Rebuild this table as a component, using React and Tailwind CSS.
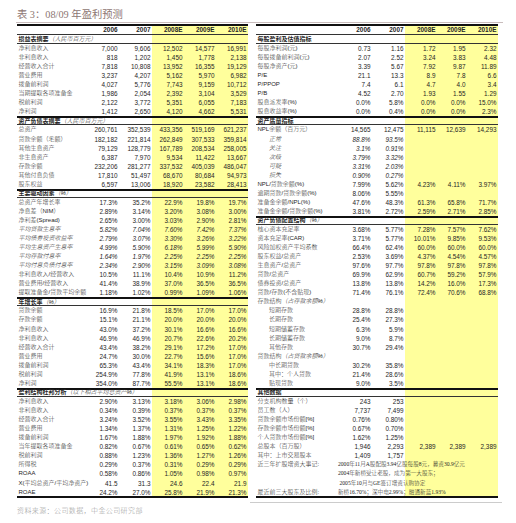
import React from 'react';

const FONT = "font-['Liberation_Sans','Noto_Sans_CJK_SC',sans-serif]";

const leftCols = ['w-[69px]', 'w-[33px]', 'w-[33px]', 'w-[32px]', 'w-[32px]', 'w-[32px]'];
const rightCols = ['w-[82px]', 'w-[34px]', 'w-[33px]', 'w-[32px]', 'w-[30px]', 'w-[31px]'];

const years = ['2006', '2007', '2008E', '2009E', '2010E'];

// 左表
const leftRows = [
  { sec: true, first: true, label: '损益表摘要', note: '（人民币百万元）' },
  { label: '净利息收入', v: ['7,000', '9,606', '12,502', '14,577', '16,991'] },
  { label: '非利息收入', v: ['818', '1,202', '1,450', '1,778', '2,138'] },
  { label: '经营收入合计', v: ['7,818', '10,808', '13,952', '16,355', '19,129'] },
  { label: '营业费用', v: ['3,237', '4,207', '5,162', '5,970', '6,982'] },
  { label: '拨备前利润', v: ['4,027', '5,776', '7,743', '9,159', '10,712'] },
  { label: '当期提取各项准备金', v: ['1,986', '2,054', '2,392', '3,104', '3,529'] },
  { label: '税前利润', v: ['2,122', '3,772', '5,351', '6,055', '7,183'] },
  { label: '净利润', v: ['1,412', '2,650', '4,120', '4,662', '5,531'] },
  { sec: true, label: '资产负债表摘要', note: '（人民币百万元）' },
  { label: '总资产', v: ['260,761', '352,539', '433,356', '519,169', '621,237'] },
  { label: '贷款余额（毛额）', v: ['182,182', '221,814', '262,849', '307,533', '359,814'] },
  { label: '其他生息资产', v: ['79,129', '128,779', '167,789', '208,534', '258,005'] },
  { label: '非生息资产', v: ['6,387', '7,970', '9,534', '11,422', '13,667'] },
  { label: '存款余额', v: ['232,206', '281,277', '337,532', '405,039', '486,047'] },
  { label: '其他付息负债', v: ['17,810', '51,497', '68,670', '80,684', '94,973'] },
  { label: '股东权益', v: ['6,597', '13,006', '18,920', '23,582', '28,413'] },
  { sec: true, label: '主要驱动因素', note: '（%）' },
  { label: '总资产年增长率', v: ['17.3%', '35.2%', '22.9%', '19.8%', '19.7%'] },
  { label: '净息差（NIM）', v: ['2.89%', '3.14%', '3.20%', '3.08%', '3.00%'] },
  { label: '净利差(Spread)', v: ['2.65%', '3.00%', '3.03%', '2.90%', '2.81%'] },
  { label: '平均贷款生息率', it: true, v: ['5.82%', '7.04%', '7.60%', '7.42%', '7.37%'] },
  { label: '平均债券投资收益率', it: true, v: ['2.79%', '3.07%', '3.30%', '3.26%', '3.22%'] },
  { label: '平均生息资产生息率', it: true, v: ['4.99%', '5.90%', '6.18%', '5.99%', '5.90%'] },
  { label: '平均存款付息率', it: true, v: ['1.64%', '1.97%', '2.25%', '2.25%', '2.25%'] },
  { label: '平均付息负债付息率', it: true, v: ['2.34%', '2.90%', '3.15%', '3.09%', '3.08%'] },
  { label: '非利息收入/经营收入', v: ['10.5%', '11.1%', '10.4%', '10.9%', '11.2%'] },
  { label: '营业费用/经营收入', v: ['41.4%', '38.9%', '37.0%', '36.5%', '36.5%'] },
  { label: '提取准备金/贷款平均余额', v: ['1.18%', '1.02%', '0.99%', '1.09%', '1.06%'] },
  { sec: true, label: '年增长率', note: '（%）' },
  { label: '贷款余额', v: ['16.9%', '21.8%', '18.5%', '17.0%', '17.0%'] },
  { label: '存款余额', v: ['15.1%', '21.1%', '20.0%', '20.0%', '20.0%'] },
  { label: '净利息收入', v: ['43.0%', '37.2%', '30.1%', '16.6%', '16.6%'] },
  { label: '非利息收入', v: ['46.9%', '46.9%', '20.7%', '22.6%', '20.2%'] },
  { label: '经营收入合计', v: ['43.4%', '38.2%', '29.1%', '17.2%', '17.0%'] },
  { label: '营业费用', v: ['24.7%', '30.0%', '22.7%', '15.6%', '17.0%'] },
  { label: '拨备前利润', v: ['65.3%', '43.4%', '34.1%', '18.3%', '17.0%'] },
  { label: '税前利润', v: ['254.9%', '77.8%', '41.9%', '13.1%', '18.6%'] },
  { label: '净利润', v: ['354.0%', '87.7%', '55.5%', '13.1%', '18.6%'] },
  { sec: true, label: '盈利结构杜邦分析', note: '（以下相占平均总资产%）' },
  { label: '净利息收入', v: ['2.90%', '3.13%', '3.18%', '3.06%', '2.98%'] },
  { label: '非利息收入', v: ['0.34%', '0.39%', '0.37%', '0.37%', '0.37%'] },
  { label: '经营收入合计', v: ['3.24%', '3.52%', '3.55%', '3.43%', '3.35%'] },
  { label: '营业费用', v: ['1.34%', '1.37%', '1.31%', '1.25%', '1.22%'] },
  { label: '拨备前利润', v: ['1.67%', '1.88%', '1.97%', '1.92%', '1.88%'] },
  { label: '当年提取各项准备金', v: ['0.82%', '0.67%', '0.61%', '0.65%', '0.62%'] },
  { label: '税前利润', v: ['0.88%', '1.23%', '1.36%', '1.27%', '1.26%'] },
  { label: '所得税', v: ['0.29%', '0.37%', '0.31%', '0.29%', '0.29%'] },
  { label: 'ROAA', v: ['0.58%', '0.86%', '1.05%', '0.98%', '0.97%'] },
  { label: 'X(平均总资产/平均净资产)', tall: true, v: ['41.5', '31.3', '24.6', '22.4', '21.9'] },
  { label: 'ROAE', v: ['24.2%', '27.0%', '25.8%', '21.9%', '21.3%'] },
];

// 右表
const rightRows = [
  { sec: true, first: true, label: '每股盈利及估值指标' },
  { label: '每股净利润(元)', v: ['0.73', '1.16', '1.72', '1.95', '2.32'] },
  { label: '每股拨备前利润(元)', v: ['2.07', '2.52', '3.24', '3.83', '4.48'] },
  { label: '每股净资产(元)', v: ['3.39', '5.67', '7.92', '9.87', '11.89'] },
  { label: 'P/E', v: ['21.1', '13.3', '8.9', '7.8', '6.6'] },
  { label: 'P/PPOP', v: ['7.4', '6.1', '4.7', '4.0', '3.4'] },
  { label: 'P/B', v: ['4.52', '2.70', '1.93', '1.55', '1.29'] },
  { label: '股息派发率(%)', v: ['0.0%', '5.8%', '0.0%', '0.0%', '15.0%'] },
  { label: '股息收益率(%)', v: ['0.0%', '0.4%', '0.0%', '0.0%', '2.3%'] },
  { sec: true, label: '资产质量指标' },
  { label: 'NPL余额（百万元）', v: ['14,565', '12,475', '11,115', '12,639', '14,293'] },
  { label: '正常', ind: true, it: true, v: ['88.8%', '93.5%'] },
  { label: '关注', ind: true, it: true, v: ['3.1%', '0.91%'] },
  { label: '次级', ind: true, it: true, v: ['3.79%', '3.32%'] },
  { label: '可疑', ind: true, it: true, v: ['3.31%', '2.03%'] },
  { label: '损失', ind: true, it: true, v: ['0.90%', '0.27%'] },
  { label: 'NPL/贷款余额(%)', v: ['7.99%', '5.62%', '4.23%', '4.11%', '3.97%'] },
  { label: '逾期贷款/贷款余额(%)', v: ['8.06%', '5.55%'] },
  { label: '准备金余额/NPL(%)', v: ['47.6%', '48.3%', '61.3%', '65.8%', '71.7%'] },
  { label: '准备金余额/贷款余额(%)', v: ['3.81%', '2.72%', '2.59%', '2.71%', '2.85%'] },
  { sec: true, label: '资产负债配置结构', note: '（%）' },
  { label: '核心资本充足率', v: ['3.68%', '5.77%', '7.28%', '7.57%', '7.62%'] },
  { label: '资本充足率(CAR)', v: ['3.71%', '5.77%', '10.01%', '9.85%', '9.53%'] },
  { label: '风险加权资产平均系数', v: ['66.4%', '62.4%', '60.0%', '60.0%', '60.0%'] },
  { label: '股东权益/总资产', v: ['2.53%', '3.69%', '4.37%', '4.54%', '4.57%'] },
  { label: '生息资产/总资产', v: ['97.6%', '97.7%', '97.8%', '97.8%', '97.8%'] },
  { label: '贷款/总资产', v: ['69.9%', '62.9%', '60.7%', '59.2%', '57.9%'] },
  { label: '债券投资/总资产', v: ['13.8%', '13.8%', '14.2%', '16.0%', '17.3%'] },
  { label: '贷款/存款(不含贴现)', v: ['71.4%', '76.1%', '72.4%', '70.6%', '68.8%'] },
  { label: '存款结构', note: '（占存款余额%）', v: [] },
  { label: '短期存款', ind: true, v: ['28.8%', '28.8%'] },
  { label: '长期存款', ind: true, v: ['25.4%', '27.3%'] },
  { label: '短期储蓄存款', ind: true, v: ['6.3%', '5.9%'] },
  { label: '长期储蓄存款', ind: true, v: ['9.0%', '8.7%'] },
  { label: '其他存款', ind: true, v: ['30.7%', '29.4%'] },
  { label: '贷款结构', note: '（占贷款余额%）', v: [] },
  { label: '中长期贷款', ind: true, v: ['30.2%', '35.8%'] },
  { label: '其中：个人贷款', ind: true, v: ['21.4%', '28.6%'] },
  { label: '贴现贷款', ind: true, v: ['9.0%', '3.5%'] },
  { sec: true, label: '其他数据' },
  { label: '分支机构数量（个）', v: ['243', '253'] },
  { label: '员工数（人）', v: ['7,737', '7,499'] },
  { label: '贷款余额市场份额[%]', v: ['0.76%', '0.80%'] },
  { label: '存款余额市场份额[%]', v: ['0.67%', '0.70%'] },
  { label: '个人贷款市场份额[%]', v: ['1.62%', '1.25%'] },
  { label: '总股本（百万股）', v: ['1,946', '2,293', '2,389', '2,389', '2,389'] },
  { label: '其中：上市交易股本', v: ['1,409', '1,757'] },
  { label: '近三年扩股增资大事记:', span: '2000年11月A股配股3.94亿股每股8元，募资30.9亿元' },
  { label: '', span: '2004年新桥受让老股，成为第一大股东；' },
  { label: '', tall: true, span: '2005年10月与GE签订增资认购协定', shift: true },
  { label: '最近前三大股东及比例:', span: '新桥16.70%；深中电2.99%；融通新蓝1.93%' },
];

const Header = ({ cols }) => (
  <div className="flex h-[11px] items-center border-t-2 border-b border-t-[#111] border-b-[#333] font-bold text-[6.4px] leading-[8px]">
    <div className={`${cols[0]} shrink-0`} />
    {years.map((y, i) => (
      <div key={y} className={`${cols[i + 1]} shrink-0 pr-[1.5px] text-right`}>
        {y}
      </div>
    ))}
  </div>
);

const Row = ({ r, cols, last }) => {
  let cls = 'h-[9.06px]';
  if (r.tall) cls = 'h-[10.5px]';
  if (r.sec && r.first) cls += ' border-b border-[#333]';
  else if (r.sec) cls += ' border-t-2 border-b border-t-[#111] border-b-[#333]';
  if (last) cls += ' border-b-2 border-[#111]';

  if (r.sec) {
    return (
      <div className={`flex items-center ${cls}`}>
        <div className="flex-1 whitespace-nowrap pl-[1.5px] text-[6px] leading-[9px]">
          <span className="font-bold">{r.label}</span>
          {r.note && <span className="font-light italic">{r.note}</span>}
        </div>
      </div>
    );
  }

  const labelCls = `${cols[0]} shrink-0 whitespace-nowrap font-light text-[6px] leading-[9px] ${r.ind ? 'pl-[13px]' : 'pl-[1.5px]'} ${r.it ? 'italic' : ''}`;

  if (r.span !== undefined) {
    return (
      <div className={`flex items-center ${cls}`}>
        <div className={labelCls}>{r.label}</div>
        <div className={`flex-1 whitespace-nowrap font-['Liberation_Serif','Noto_Sans_CJK_SC',serif] font-light text-[5.6px] leading-[9px] ${r.shift ? 'pl-[1.5px]' : ''}`}>
          {r.span}
        </div>
      </div>
    );
  }

  return (
    <div className={`flex items-center ${cls}`}>
      <div className={labelCls}>
        {r.label}
        {r.note && <span className="italic">{r.note}</span>}
      </div>
      {[0, 1, 2, 3, 4].map((i) => (
        <div
          key={i}
          className={`${cols[i + 1]} shrink-0 whitespace-nowrap pr-[1.5px] text-right text-[6.4px] leading-[9px] ${r.it ? 'italic' : ''}`}
        >
          {r.v[i] || ''}
        </div>
      ))}
    </div>
  );
};

const Table = ({ rows, cols, width, band }) => (
  <div className={`${width} shrink-0 ${band}`}>
    <Header cols={cols} />
    {rows.map((r, i) => (
      <Row key={i} r={r} cols={cols} last={i === rows.length - 1} />
    ))}
  </div>
);

export default function App() {
  return (
    <div className={`w-[516px] h-[523px] overflow-hidden bg-white text-[#262626] ${FONT}`}>
      {/* 标题 */}
      <div className="pl-[17px] pt-[8px] font-['Liberation_Serif','Noto_Sans_CJK_SC',serif] text-[10.3px] leading-[14px] text-[#8d7672]">
        表 3：08/09 年盈利预测
      </div>
      <div className="ml-[16px] h-px w-[487px] bg-[#c9bdbd]" />

      <div className="mt-px flex items-start gap-[8px] pl-[17px]">
        <Table
          rows={leftRows}
          cols={leftCols}
          width="w-[231px]"
          band="bg-[linear-gradient(to_right,transparent_135px,#ffff9c_135px)]"
        />
        <div className="w-[242px] shrink-0">
          <Table
            rows={rightRows}
            cols={rightCols}
            width="w-[242px]"
            band="bg-[linear-gradient(to_right,transparent_149px,#ffff9c_149px)]"
          />
          <div className="-ml-[6px] mt-[4px] h-px w-[252px] bg-[#cccccc]" />
        </div>
      </div>

      {/* 资料来源 */}
      <div className="pl-[17px] pt-[3px] text-[7px] font-light leading-[9px] tracking-[0.4px] text-[#9a9a9a]">
        资料来源：公司数据，中金公司研究部
      </div>
    </div>
  );
}
